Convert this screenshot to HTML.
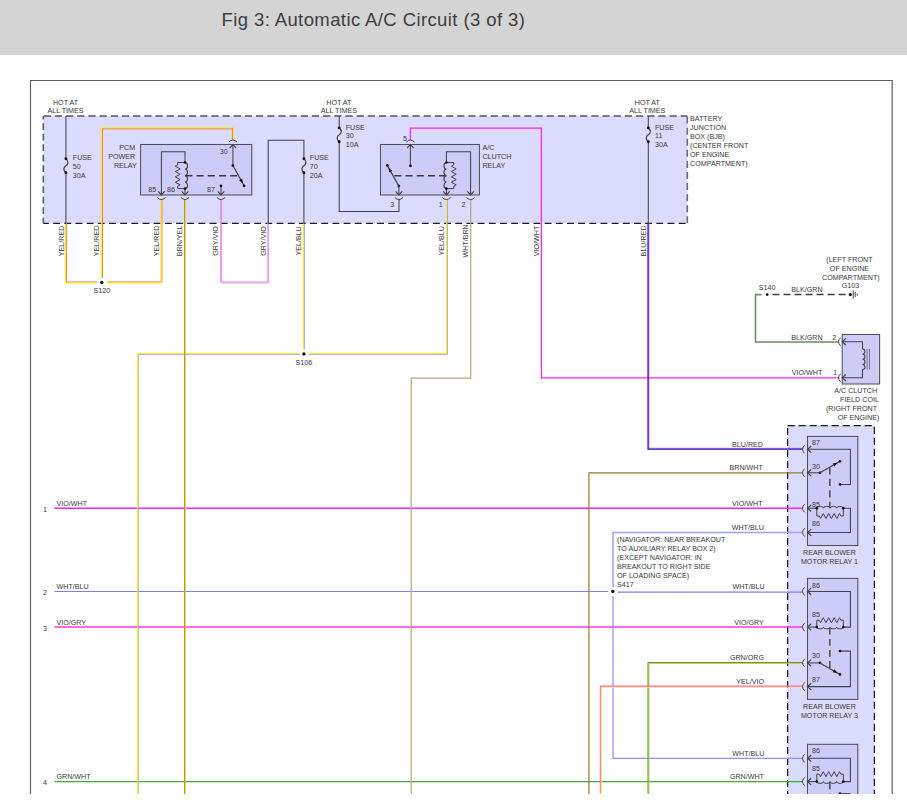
<!DOCTYPE html>
<html lang="en"><head><meta charset="utf-8"><title>Fig 3: Automatic A/C Circuit (3 of 3)</title>
<style>
html,body{margin:0;padding:0;background:#fff;}
body{width:907px;height:812px;overflow:hidden;position:relative;font-family:"Liberation Sans",sans-serif;}
#hdr{position:absolute;left:0;top:0;width:907px;height:55px;background:#d4d4d4;}
#hdr h1{position:absolute;left:221.5px;top:8.6px;margin:0;font-weight:400;font-size:18.5px;line-height:22px;color:#3e3e3e;white-space:nowrap;letter-spacing:0.40px;}
#dia{position:absolute;left:0;top:0;}
#dia text{font-family:"Liberation Sans",sans-serif;}
</style></head><body>
<div id="hdr"><h1>Fig 3: Automatic A/C Circuit (3 of 3)</h1></div>
<svg id="dia" width="907" height="812" viewBox="0 0 907 812">
<polyline points="30.5,794 30.5,80.5 892.2,80.5" fill="none" stroke="#585858" stroke-width="1.1" />
<polyline points="892.2,80 892.2,794" fill="none" stroke="#777" stroke-width="1.4" />
<rect x="43.3" y="116" width="644.1" height="107.2" fill="#dbdbfd"/>
<path d="M43.3,116H687.4" stroke="#54545e" stroke-width="1.5" stroke-dasharray="7.2 3.976" stroke-dashoffset="-0.4" fill="none"/>
<path d="M43.3,223.3H687.4" stroke="#1c1c20" stroke-width="1.25" stroke-dasharray="6.9 4.27" stroke-dashoffset="1.3" fill="none"/>
<path d="M43.3,116V223.2" stroke="#5c5c68" stroke-width="1.6" stroke-dasharray="6.7 3.8" stroke-dashoffset="3.2" fill="none"/>
<path d="M687.3,116.6V223.2" stroke="#686878" stroke-width="1.6" stroke-dasharray="7 4.08" fill="none"/>
<rect x="787.6" y="425.5" width="86.8" height="374.5" fill="#dbdbfd"/>
<rect x="787.6" y="425.5" width="86.8" height="374.5" fill="none" stroke="#15151a" stroke-width="1.25" stroke-dasharray="7.2 3.8"/>
<rect x="140.6" y="144.5" width="111.2" height="50.5" fill="#ccccf9"/>
<rect x="380.5" y="144.5" width="98.9" height="50.5" fill="#ccccf9"/>
<rect x="842.2" y="334.5" width="37.4" height="49.5" fill="#ccccf9"/>
<rect x="807.5" y="436.4" width="50.3" height="109.1" fill="#ccccf9"/>
<rect x="807.5" y="578.4" width="50.3" height="121" fill="#ccccf9"/>
<rect x="807.5" y="744.3" width="50.3" height="55.7" fill="#ccccf9"/>
<polyline points="54.5,508.2 802.6,508.2" fill="none" stroke="#ff22ee" stroke-width="1.35" />
<polyline points="54.5,591.5 608.2,591.5" fill="none" stroke="#7c7cff" stroke-width="1.15" />
<polyline points="54.5,627 802.6,627" fill="none" stroke="#ff34e4" stroke-width="1.3" />
<polyline points="54.5,781.5 802.6,781.5" fill="none" stroke="#3cb028" stroke-width="1.25" />
<polyline points="66.4,223 66.4,282 97,282" fill="none" stroke="#ff7428" stroke-width="1" stroke-linejoin="miter"/>
<polyline points="65.4,224 65.4,283 96,283" fill="none" stroke="#ffee10" stroke-width="1" stroke-linejoin="miter"/>
<polyline points="107.5,282 161.9,282 161.9,199" fill="none" stroke="#ff7428" stroke-width="1" stroke-linejoin="miter"/>
<polyline points="106.5,283 160.9,283 160.9,200" fill="none" stroke="#ffee10" stroke-width="1" stroke-linejoin="miter"/>
<polyline points="102.4,278 102.4,128.8 233.9,128.8" fill="none" stroke="#ff7428" stroke-width="1" stroke-linejoin="miter"/>
<polyline points="101.4,277 101.4,127.8 232.9,127.8" fill="none" stroke="#ffee10" stroke-width="1" stroke-linejoin="miter"/>
<polyline points="232.4,127.8 232.4,140" fill="none" stroke="#ff7428" stroke-width="1" stroke-linejoin="miter"/>
<polyline points="233.4,127.8 233.4,140" fill="none" stroke="#ffee10" stroke-width="1" stroke-linejoin="miter"/>
<polyline points="221.4,199.9 221.4,282.8 268.6,282.8 268.6,223.9" fill="none" stroke="#c486cc" stroke-width="0.8" stroke-linejoin="miter"/>
<polyline points="220.6,199.1 220.6,282 267.8,282 267.8,223.1" fill="none" stroke="#ff86fa" stroke-width="1" stroke-linejoin="miter"/>
<polyline points="304.4,223.5 304.4,349.5" fill="none" stroke="#8c8cd8" stroke-width="0.75" stroke-linejoin="miter"/>
<polyline points="303.5,223.5 303.5,349.5" fill="none" stroke="#f6f010" stroke-width="1" stroke-linejoin="miter"/>
<polyline points="447.5,200 447.5,354.4 309,354.4" fill="none" stroke="#8c8cd8" stroke-width="0.75" stroke-linejoin="miter"/>
<polyline points="446.6,199.1 446.6,353.5 308.1,353.5" fill="none" stroke="#f6f010" stroke-width="1" stroke-linejoin="miter"/>
<polyline points="300,354.4 138.3,354.4 138.3,794.5" fill="none" stroke="#8c8cd8" stroke-width="0.75" stroke-linejoin="miter"/>
<polyline points="299.1,353.5 137.4,353.5 137.4,793.6" fill="none" stroke="#f6f010" stroke-width="1" stroke-linejoin="miter"/>
<polyline points="185.45,199.5 185.45,794" fill="none" stroke="#e6dc18" stroke-width="0.9" stroke-linejoin="miter"/>
<polyline points="184.55,199.5 184.55,794" fill="none" stroke="#b09038" stroke-width="1" stroke-linejoin="miter"/>
<polyline points="470.7,199.5 470.7,378.2 411.2,378.2 411.2,794" fill="none" stroke="#b6aa80" stroke-width="1.25" />
<polyline points="410.4,140 410.4,128.2 541.4,128.2 541.4,377.8 838.6,377.8" fill="none" stroke="#ff22ff" stroke-width="1.25" />
<polyline points="648.95,222.85 648.95,448.25 803.25,448.25" fill="none" stroke="#f84848" stroke-width="0.75" stroke-linejoin="miter"/>
<polyline points="648.05,223.75 648.05,449.15 802.35,449.15" fill="none" stroke="#2610ea" stroke-width="1.3" stroke-linejoin="miter"/>
<polyline points="761.5,294.6 755.5,294.6 755.5,342 838.6,342" fill="none" stroke="#6c8b5e" stroke-width="1.55" />
<polyline points="772.5,294.6 846,294.6" fill="none" stroke="#3c3c40" stroke-width="1.5" stroke-dasharray="7 4.02" />
<polyline points="802.6,472.8 588.9,472.8 588.9,794" fill="none" stroke="#987a28" stroke-width="1.2" />
<polyline points="617.6,592.1 802.6,592.1" fill="none" stroke="#7c7cff" stroke-width="1.25" />
<polyline points="802.6,532.6 613,532.6 613,587.2" fill="none" stroke="#a0a0f6" stroke-width="1.5" />
<polyline points="613,596 613,758.4 802.6,758.4" fill="none" stroke="#8e8ef6" stroke-width="1.2" />
<polyline points="803.15,663.45 648.95,663.45 648.95,794.55" fill="none" stroke="#f2a84c" stroke-width="0.9" stroke-linejoin="miter"/>
<polyline points="802.2,662.5 648,662.5 648,793.6" fill="none" stroke="#46ae1c" stroke-width="1.1" stroke-linejoin="miter"/>
<polyline points="803.1,687.1 601.3,687.1 601.3,794.5" fill="none" stroke="#fff424" stroke-width="1" stroke-linejoin="miter"/>
<polyline points="802.1,686.1 600.3,686.1 600.3,793.5" fill="none" stroke="#ff5ed0" stroke-width="1.05" stroke-linejoin="miter"/>
<polyline points="65.9,116 65.9,158.8" fill="none" stroke="#42424c" stroke-width="1.05" />
<polyline points="65.9,172.8 65.9,223.2" fill="none" stroke="#42424c" stroke-width="1.05" />
<path d="M65.9,158.8 C69.1,161.3 68.1,164.3 65.9,165.8 S62.7,170.3 65.9,172.8" fill="none" stroke="#42424c" stroke-width="1.25" />
<circle cx="65.9" cy="158.8" r="1.45" fill="#111"/>
<circle cx="65.9" cy="172.8" r="1.45" fill="#111"/>
<polyline points="268.2,223.2 268.2,140.3 303.9,140.3 303.9,158.8" fill="none" stroke="#42424c" stroke-width="1.05" />
<polyline points="303.9,172.8 303.9,223.2" fill="none" stroke="#42424c" stroke-width="1.05" />
<path d="M303.9,158.8 C307.1,161.3 306.1,164.3 303.9,165.8 S300.7,170.3 303.9,172.8" fill="none" stroke="#42424c" stroke-width="1.25" />
<circle cx="303.9" cy="158.8" r="1.45" fill="#111"/>
<circle cx="303.9" cy="172.8" r="1.45" fill="#111"/>
<polyline points="339.2,116 339.2,127.9" fill="none" stroke="#42424c" stroke-width="1.05" />
<polyline points="339.2,141.8 339.2,211.4 399,211.4 399,199.5" fill="none" stroke="#42424c" stroke-width="1.05" />
<path d="M339.2,127.9 C342.4,130.4 341.4,133.35 339.2,134.85 S336,139.3 339.2,141.8" fill="none" stroke="#42424c" stroke-width="1.25" />
<circle cx="339.2" cy="127.9" r="1.45" fill="#111"/>
<circle cx="339.2" cy="141.8" r="1.45" fill="#111"/>
<polyline points="648.3,116 648.3,127.9" fill="none" stroke="#42424c" stroke-width="1.05" />
<polyline points="648.3,141.8 648.3,223.2" fill="none" stroke="#42424c" stroke-width="1.05" />
<path d="M648.3,127.9 C651.5,130.4 650.5,133.35 648.3,134.85 S645.1,139.3 648.3,141.8" fill="none" stroke="#42424c" stroke-width="1.25" />
<circle cx="648.3" cy="127.9" r="1.45" fill="#111"/>
<circle cx="648.3" cy="141.8" r="1.45" fill="#111"/>
<rect x="140.6" y="144.5" width="111.2" height="50.5" fill="none" stroke="#50505c" stroke-width="1.05"/>
<polyline points="161.4,195 161.4,151.8 185,151.8 185,162.5" fill="none" stroke="#42424c" stroke-width="1.05" />
<polyline points="185,188.6 185,195" fill="none" stroke="#42424c" stroke-width="1.05" />
<polyline points="185,162.5 177.7,162.5 177.7,164.9 175.3,166.23 180.1,168.89 175.3,171.56 180.1,174.22 175.3,176.88 180.1,179.54 175.3,182.21 180.1,184.87 177.7,186.2 177.7,188.6 185,188.6" fill="none" stroke="#42424c" stroke-width="1" />
<path d="M185,162.5 A3.26,2.5 90 0 1 185,169.03 A3.26,2.5 90 0 1 185,175.55 A3.26,2.5 90 0 1 185,182.07 A3.26,2.5 90 0 1 185,188.6" fill="none" stroke="#42424c" stroke-width="1.15" />
<circle cx="185" cy="162.5" r="1.35" fill="#111"/>
<circle cx="185" cy="188.6" r="1.35" fill="#111"/>
<polyline points="232.9,144.5 232.9,165.5" fill="none" stroke="#42424c" stroke-width="1.05" />
<polyline points="232.9,165.5 244.1,185.8" fill="none" stroke="#42424c" stroke-width="1.2" />
<circle cx="232.9" cy="165.5" r="1.35" fill="#111"/>
<circle cx="244.1" cy="185.8" r="1.35" fill="#111"/>
<path d="M242.84,183.52 L239.05,180.37 L242.2,178.63 Z" fill="#111"/>
<polyline points="185.4,175.7 238,175.7" fill="none" stroke="#38383f" stroke-width="1.5" stroke-dasharray="7 4.2" />
<polyline points="221,185.8 221,195" fill="none" stroke="#42424c" stroke-width="1.05" />
<circle cx="221" cy="185.8" r="1.35" fill="#111"/>
<polyline points="158.1,191.3 161.4,195 164.7,191.3" fill="none" stroke="#42424c" stroke-width="1.15" />
<path d="M157.3,197.5 Q161.4,201.5 165.5,197.5" fill="none" stroke="#42424c" stroke-width="1" />
<polyline points="181.7,191.3 185,195 188.3,191.3" fill="none" stroke="#42424c" stroke-width="1.15" />
<path d="M180.9,197.5 Q185,201.5 189.1,197.5" fill="none" stroke="#42424c" stroke-width="1" />
<polyline points="217.7,191.3 221,195 224.3,191.3" fill="none" stroke="#42424c" stroke-width="1.15" />
<path d="M216.9,197.5 Q221,201.5 225.1,197.5" fill="none" stroke="#42424c" stroke-width="1" />
<polyline points="229.6,148.2 232.9,144.5 236.2,148.2" fill="none" stroke="#42424c" stroke-width="1.15" />
<path d="M228.8,142 Q232.9,138 237,142" fill="none" stroke="#42424c" stroke-width="1" />
<text x="152.3" y="191.97" text-anchor="middle" font-size="7.15" fill="#3a3a40" >85</text>
<text x="170.9" y="191.97" text-anchor="middle" font-size="7.15" fill="#3a3a40" >86</text>
<text x="211" y="191.97" text-anchor="middle" font-size="7.15" fill="#3a3a40" >87</text>
<text x="223.8" y="153.97" text-anchor="middle" font-size="7.15" fill="#3a3a40" >30</text>
<text x="135.2" y="150.17" text-anchor="end" font-size="7.15" fill="#3a3a40" >PCM</text>
<text x="135.2" y="159.17" text-anchor="end" font-size="7.15" fill="#3a3a40" >POWER</text>
<text x="136.8" y="168.17" text-anchor="end" font-size="7.15" fill="#3a3a40" >RELAY</text>
<rect x="380.5" y="144.5" width="98.9" height="50.5" fill="none" stroke="#50505c" stroke-width="1.05"/>
<polyline points="410.4,144.5 410.4,165.8" fill="none" stroke="#42424c" stroke-width="1.05" />
<circle cx="410.4" cy="165.8" r="1.35" fill="#111"/>
<polyline points="387.3,165.4 398.9,186.1" fill="none" stroke="#42424c" stroke-width="1.2" />
<circle cx="387.3" cy="165.4" r="1.35" fill="#111"/>
<circle cx="398.9" cy="186.1" r="1.35" fill="#111"/>
<path d="M388.57,167.67 L392.39,170.8 L389.25,172.56 Z" fill="#111"/>
<polyline points="398.9,186.1 398.9,195" fill="none" stroke="#42424c" stroke-width="1.05" />
<polyline points="446.2,175.7 393.6,175.7" fill="none" stroke="#38383f" stroke-width="1.5" stroke-dasharray="7 4.2" />
<polyline points="446.4,195 446.4,188.6" fill="none" stroke="#42424c" stroke-width="1.05" />
<polyline points="446.4,162.5 446.4,151.8 470.6,151.8 470.6,195" fill="none" stroke="#42424c" stroke-width="1.05" />
<polyline points="446.4,162.5 453.8,162.5 453.8,164.9 451.4,166.23 456.2,168.89 451.4,171.56 456.2,174.22 451.4,176.88 456.2,179.54 451.4,182.21 456.2,184.87 453.8,186.2 453.8,188.6 446.4,188.6" fill="none" stroke="#42424c" stroke-width="1" />
<path d="M446.4,162.5 A3.26,2.4 90 0 0 446.4,169.03 A3.26,2.4 90 0 0 446.4,175.55 A3.26,2.4 90 0 0 446.4,182.07 A3.26,2.4 90 0 0 446.4,188.6" fill="none" stroke="#42424c" stroke-width="1.15" />
<circle cx="446.4" cy="162.5" r="1.35" fill="#111"/>
<circle cx="446.4" cy="188.6" r="1.35" fill="#111"/>
<polyline points="395.6,191.3 398.9,195 402.2,191.3" fill="none" stroke="#42424c" stroke-width="1.15" />
<path d="M394.8,197.5 Q398.9,201.5 403,197.5" fill="none" stroke="#42424c" stroke-width="1" />
<polyline points="443.1,191.3 446.4,195 449.7,191.3" fill="none" stroke="#42424c" stroke-width="1.15" />
<path d="M442.3,197.5 Q446.4,201.5 450.5,197.5" fill="none" stroke="#42424c" stroke-width="1" />
<polyline points="467.3,191.3 470.6,195 473.9,191.3" fill="none" stroke="#42424c" stroke-width="1.15" />
<path d="M466.5,197.5 Q470.6,201.5 474.7,197.5" fill="none" stroke="#42424c" stroke-width="1" />
<polyline points="407.1,148.2 410.4,144.5 413.7,148.2" fill="none" stroke="#42424c" stroke-width="1.15" />
<path d="M406.3,142 Q410.4,138 414.5,142" fill="none" stroke="#42424c" stroke-width="1" />
<text x="392.2" y="207.37" text-anchor="middle" font-size="7.15" fill="#3a3a40" >3</text>
<text x="440.7" y="207.37" text-anchor="middle" font-size="7.15" fill="#3a3a40" >1</text>
<text x="463.4" y="207.37" text-anchor="middle" font-size="7.15" fill="#3a3a40" >2</text>
<text x="405" y="140.87" text-anchor="middle" font-size="7.15" fill="#3a3a40" >5</text>
<text x="482.4" y="150.17" text-anchor="start" font-size="7.15" fill="#3a3a40" >A/C</text>
<text x="482.4" y="158.97" text-anchor="start" font-size="7.15" fill="#3a3a40" >CLUTCH</text>
<text x="482.4" y="167.77" text-anchor="start" font-size="7.15" fill="#3a3a40" >RELAY</text>
<text x="65.5" y="104.97" text-anchor="middle" font-size="7.15" fill="#3a3a40" >HOT AT</text>
<text x="65.5" y="113.07" text-anchor="middle" font-size="7.15" fill="#3a3a40" >ALL TIMES</text>
<text x="338.9" y="104.97" text-anchor="middle" font-size="7.15" fill="#3a3a40" >HOT AT</text>
<text x="338.9" y="113.07" text-anchor="middle" font-size="7.15" fill="#3a3a40" >ALL TIMES</text>
<text x="647.3" y="104.97" text-anchor="middle" font-size="7.15" fill="#3a3a40" >HOT AT</text>
<text x="647.3" y="113.07" text-anchor="middle" font-size="7.15" fill="#3a3a40" >ALL TIMES</text>
<text x="72.8" y="159.97" text-anchor="start" font-size="7.15" fill="#3a3a40" >FUSE</text>
<text x="72.8" y="169.07" text-anchor="start" font-size="7.15" fill="#3a3a40" >50</text>
<text x="72.8" y="178.17" text-anchor="start" font-size="7.15" fill="#3a3a40" >30A</text>
<text x="309.8" y="159.97" text-anchor="start" font-size="7.15" fill="#3a3a40" >FUSE</text>
<text x="309.8" y="169.07" text-anchor="start" font-size="7.15" fill="#3a3a40" >70</text>
<text x="309.8" y="178.17" text-anchor="start" font-size="7.15" fill="#3a3a40" >20A</text>
<text x="345.7" y="130.07" text-anchor="start" font-size="7.15" fill="#3a3a40" >FUSE</text>
<text x="345.7" y="138.47" text-anchor="start" font-size="7.15" fill="#3a3a40" >30</text>
<text x="345.7" y="147.07" text-anchor="start" font-size="7.15" fill="#3a3a40" >10A</text>
<text x="655" y="130.17" text-anchor="start" font-size="7.15" fill="#3a3a40" >FUSE</text>
<text x="655" y="138.27" text-anchor="start" font-size="7.15" fill="#3a3a40" >11</text>
<text x="655" y="147.37" text-anchor="start" font-size="7.15" fill="#3a3a40" >30A</text>
<text x="690" y="120.87" text-anchor="start" font-size="7.15" fill="#3a3a40" >BATTERY</text>
<text x="690" y="129.97" text-anchor="start" font-size="7.15" fill="#3a3a40" >JUNCTION</text>
<text x="690" y="139.07" text-anchor="start" font-size="7.15" fill="#3a3a40" >BOX (BJB)</text>
<text x="690" y="148.17" text-anchor="start" font-size="7.15" fill="#3a3a40" >(CENTER FRONT</text>
<text x="690" y="157.27" text-anchor="start" font-size="7.15" fill="#3a3a40" >OF ENGINE</text>
<text x="690" y="166.37" text-anchor="start" font-size="7.15" fill="#3a3a40" >COMPARTMENT)</text>
<text x="61.8" y="243.47" text-anchor="middle" font-size="7.15" fill="#3a3a40" transform="rotate(-90 61.8 240.9)" >YEL/RED</text>
<text x="96.8" y="243.47" text-anchor="middle" font-size="7.15" fill="#3a3a40" transform="rotate(-90 96.8 240.9)" >YEL/RED</text>
<text x="156.7" y="243.47" text-anchor="middle" font-size="7.15" fill="#3a3a40" transform="rotate(-90 156.7 240.9)" >YEL/RED</text>
<text x="179.6" y="243.47" text-anchor="middle" font-size="7.15" fill="#3a3a40" transform="rotate(-90 179.6 240.9)" >BRN/YEL</text>
<text x="215.1" y="243.47" text-anchor="middle" font-size="7.15" fill="#3a3a40" transform="rotate(-90 215.1 240.9)" >GRY/VIO</text>
<text x="263.9" y="243.47" text-anchor="middle" font-size="7.15" fill="#3a3a40" transform="rotate(-90 263.9 240.9)" >GRY/VIO</text>
<text x="298.8" y="243.47" text-anchor="middle" font-size="7.15" fill="#3a3a40" transform="rotate(-90 298.8 240.9)" >YEL/BLU</text>
<text x="441.5" y="243.47" text-anchor="middle" font-size="7.15" fill="#3a3a40" transform="rotate(-90 441.5 240.9)" >YEL/BLU</text>
<text x="465.9" y="243.47" text-anchor="middle" font-size="7.15" fill="#3a3a40" transform="rotate(-90 465.9 240.9)" >WHT/BRN</text>
<text x="536.4" y="243.47" text-anchor="middle" font-size="7.15" fill="#3a3a40" transform="rotate(-90 536.4 240.9)" >VIO/WHT</text>
<text x="643.3" y="243.47" text-anchor="middle" font-size="7.15" fill="#3a3a40" transform="rotate(-90 643.3 240.9)" >BLU/RED</text>
<circle cx="101.8" cy="282.5" r="1.7" fill="#111"/>
<text x="101.8" y="293.37" text-anchor="middle" font-size="7.15" fill="#3a3a40" >S120</text>
<circle cx="303.9" cy="353.9" r="1.7" fill="#111"/>
<text x="303.9" y="364.77" text-anchor="middle" font-size="7.15" fill="#3a3a40" >S106</text>
<circle cx="767.2" cy="294.6" r="1.4" fill="#111"/>
<text x="767.2" y="290.17" text-anchor="middle" font-size="7.15" fill="#3a3a40" >S140</text>
<text x="807" y="291.97" text-anchor="middle" font-size="7.15" fill="#3a3a40" >BLK/GRN</text>
<circle cx="850.3" cy="294.6" r="1.6" fill="#111"/>
<polyline points="853.2,290.4 853.2,298.8" fill="none" stroke="#42424c" stroke-width="1" />
<polyline points="855.2,292 855.2,297.2" fill="none" stroke="#42424c" stroke-width="1" />
<polyline points="857.2,293.6 857.2,295.6" fill="none" stroke="#42424c" stroke-width="1" />
<text x="849.4" y="262.37" text-anchor="middle" font-size="7.15" fill="#3a3a40" >(LEFT FRONT</text>
<text x="849.5" y="271.07" text-anchor="middle" font-size="7.15" fill="#3a3a40" >OF ENGINE</text>
<text x="850.8" y="279.77" text-anchor="middle" font-size="7.15" fill="#3a3a40" >COMPARTMENT)</text>
<text x="850.4" y="288.47" text-anchor="middle" font-size="7.15" fill="#3a3a40" >G103</text>
<rect x="842.2" y="334.5" width="37.4" height="49.5" fill="none" stroke="#50505c" stroke-width="1.05"/>
<polyline points="842.2,341.7 862.5,341.7 862.5,349" fill="none" stroke="#42424c" stroke-width="1.05" />
<polyline points="862.5,369.6 862.5,377.8 842.2,377.8" fill="none" stroke="#42424c" stroke-width="1.05" />
<path d="M862.5,349 A2.58,2.6 90 0 1 862.5,354.15 A2.58,2.6 90 0 1 862.5,359.3 A2.58,2.6 90 0 1 862.5,364.45 A2.58,2.6 90 0 1 862.5,369.6" fill="none" stroke="#42424c" stroke-width="1.05" />
<polyline points="867.1,349 867.1,369.6" fill="none" stroke="#5a5a66" stroke-width="0.8" />
<polyline points="869.5,349 869.5,369.6" fill="none" stroke="#5a5a66" stroke-width="0.8" />
<polyline points="845.9,338.4 842.2,341.7 845.9,345" fill="none" stroke="#42424c" stroke-width="1.15" />
<path d="M840.6,337.6 Q836.5,341.7 840.6,345.8" fill="none" stroke="#42424c" stroke-width="1" />
<polyline points="845.9,374.5 842.2,377.8 845.9,381.1" fill="none" stroke="#42424c" stroke-width="1.15" />
<path d="M840.6,373.7 Q836.5,377.8 840.6,381.9" fill="none" stroke="#42424c" stroke-width="1" />
<text x="807" y="339.87" text-anchor="middle" font-size="7.15" fill="#3a3a40" >BLK/GRN</text>
<text x="834.3" y="339.87" text-anchor="middle" font-size="7.15" fill="#3a3a40" >2</text>
<text x="807" y="375.17" text-anchor="middle" font-size="7.15" fill="#3a3a40" >VIO/WHT</text>
<text x="835.3" y="375.17" text-anchor="middle" font-size="7.15" fill="#3a3a40" >1</text>
<text x="877.2" y="392.87" text-anchor="end" font-size="7.15" fill="#3a3a40" >A/C CLUTCH</text>
<text x="878.9" y="401.77" text-anchor="end" font-size="7.15" fill="#3a3a40" >FIELD COIL</text>
<text x="877" y="410.67" text-anchor="end" font-size="7.15" fill="#3a3a40" >(RIGHT FRONT</text>
<text x="879.3" y="419.57" text-anchor="end" font-size="7.15" fill="#3a3a40" >OF ENGINE)</text>
<rect x="807.5" y="436.4" width="50.3" height="109.1" fill="none" stroke="#50505c" stroke-width="1.05"/>
<polyline points="807.5,449.3 850.4,449.3 850.4,484.4 840,484.4" fill="none" stroke="#42424c" stroke-width="1.05" />
<circle cx="840" cy="484.4" r="1.35" fill="#111"/>
<polyline points="807.5,472.8 820,472.8" fill="none" stroke="#42424c" stroke-width="1.05" />
<circle cx="820" cy="472.8" r="1.35" fill="#111"/>
<polyline points="820,472.8 840,461.3" fill="none" stroke="#42424c" stroke-width="1.2" />
<circle cx="840" cy="461.3" r="1.35" fill="#111"/>
<path d="M837.57,462.7 L834.48,466.55 L832.69,463.43 Z" fill="#111"/>
<polyline points="829.8,467.2 829.8,507.8" fill="none" stroke="#50505c" stroke-width="1.6" stroke-dasharray="7.2 4.3" />
<polyline points="807.5,508.2 816.8,508.2" fill="none" stroke="#42424c" stroke-width="1.05" />
<polyline points="843.3,508.2 850.4,508.2 850.4,532.4 807.5,532.4" fill="none" stroke="#42424c" stroke-width="1.05" />
<path d="M816.8,508.2 A3.31,1.8 0 0 1 823.42,508.2 A3.31,1.8 0 0 1 830.05,508.2 A3.31,1.8 0 0 1 836.67,508.2 A3.31,1.8 0 0 1 843.3,508.2" fill="none" stroke="#42424c" stroke-width="1" />
<polyline points="816.8,508.2 816.8,516 819.2,516 820.56,518.5 823.27,513.5 825.98,518.5 828.69,513.5 831.41,518.5 834.12,513.5 836.83,518.5 839.54,513.5 840.9,516 843.3,516 843.3,508.2" fill="none" stroke="#42424c" stroke-width="1" />
<circle cx="816.8" cy="508.2" r="1.35" fill="#111"/>
<circle cx="843.3" cy="508.2" r="1.35" fill="#111"/>
<polyline points="811.2,446 807.5,449.3 811.2,452.6" fill="none" stroke="#42424c" stroke-width="1.15" />
<path d="M804.6,445.2 Q800.5,449.3 804.6,453.4" fill="none" stroke="#42424c" stroke-width="1" />
<polyline points="811.2,469.5 807.5,472.8 811.2,476.1" fill="none" stroke="#42424c" stroke-width="1.15" />
<path d="M804.6,468.7 Q800.5,472.8 804.6,476.9" fill="none" stroke="#42424c" stroke-width="1" />
<polyline points="811.2,504.9 807.5,508.2 811.2,511.5" fill="none" stroke="#42424c" stroke-width="1.15" />
<path d="M804.6,504.1 Q800.5,508.2 804.6,512.3" fill="none" stroke="#42424c" stroke-width="1" />
<polyline points="811.2,529.1 807.5,532.4 811.2,535.7" fill="none" stroke="#42424c" stroke-width="1.15" />
<path d="M804.6,528.3 Q800.5,532.4 804.6,536.5" fill="none" stroke="#42424c" stroke-width="1" />
<text x="812" y="445.17" text-anchor="start" font-size="7.15" fill="#3a3a40" >87</text>
<text x="812" y="469.17" text-anchor="start" font-size="7.15" fill="#3a3a40" >30</text>
<text x="812" y="506.87" text-anchor="start" font-size="7.15" fill="#3a3a40" >85</text>
<text x="812" y="525.97" text-anchor="start" font-size="7.15" fill="#3a3a40" >86</text>
<text x="829.5" y="554.87" text-anchor="middle" font-size="7.15" fill="#3a3a40" >REAR BLOWER</text>
<text x="829.5" y="563.97" text-anchor="middle" font-size="7.15" fill="#3a3a40" >MOTOR RELAY 1</text>
<rect x="807.5" y="578.4" width="50.3" height="121" fill="none" stroke="#50505c" stroke-width="1.05"/>
<polyline points="807.5,591.4 850.4,591.4 850.4,627.1 843.3,627.1" fill="none" stroke="#42424c" stroke-width="1.05" />
<polyline points="807.5,627.1 816.8,627.1" fill="none" stroke="#42424c" stroke-width="1.05" />
<path d="M816.8,627.1 A3.31,1.8 0 0 0 823.42,627.1 A3.31,1.8 0 0 0 830.05,627.1 A3.31,1.8 0 0 0 836.67,627.1 A3.31,1.8 0 0 0 843.3,627.1" fill="none" stroke="#42424c" stroke-width="1" />
<polyline points="816.8,627.1 816.8,620.2 819.2,620.2 820.56,622.7 823.27,617.7 825.98,622.7 828.69,617.7 831.41,622.7 834.12,617.7 836.83,622.7 839.54,617.7 840.9,620.2 843.3,620.2 843.3,627.1" fill="none" stroke="#42424c" stroke-width="1" />
<circle cx="816.8" cy="627.1" r="1.35" fill="#111"/>
<circle cx="843.3" cy="627.1" r="1.35" fill="#111"/>
<polyline points="829.8,627.8 829.8,668.4" fill="none" stroke="#50505c" stroke-width="1.6" stroke-dasharray="6.8 4.3" />
<polyline points="807.5,662.9 820,662.9" fill="none" stroke="#42424c" stroke-width="1.05" />
<circle cx="820" cy="662.9" r="1.35" fill="#111"/>
<polyline points="820,662.9 840,674.4" fill="none" stroke="#42424c" stroke-width="1.2" />
<circle cx="840" cy="674.4" r="1.35" fill="#111"/>
<path d="M837.57,673 L832.69,672.27 L834.48,669.15 Z" fill="#111"/>
<polyline points="840,651.1 850.4,651.1 850.4,686.6 807.5,686.6" fill="none" stroke="#42424c" stroke-width="1.05" />
<circle cx="840" cy="651.1" r="1.35" fill="#111"/>
<polyline points="811.2,588.1 807.5,591.4 811.2,594.7" fill="none" stroke="#42424c" stroke-width="1.15" />
<path d="M804.6,587.3 Q800.5,591.4 804.6,595.5" fill="none" stroke="#42424c" stroke-width="1" />
<polyline points="811.2,623.8 807.5,627.1 811.2,630.4" fill="none" stroke="#42424c" stroke-width="1.15" />
<path d="M804.6,623 Q800.5,627.1 804.6,631.2" fill="none" stroke="#42424c" stroke-width="1" />
<polyline points="811.2,659.6 807.5,662.9 811.2,666.2" fill="none" stroke="#42424c" stroke-width="1.15" />
<path d="M804.6,658.8 Q800.5,662.9 804.6,667" fill="none" stroke="#42424c" stroke-width="1" />
<polyline points="811.2,683.3 807.5,686.6 811.2,689.9" fill="none" stroke="#42424c" stroke-width="1.15" />
<path d="M804.6,682.5 Q800.5,686.6 804.6,690.7" fill="none" stroke="#42424c" stroke-width="1" />
<text x="812" y="588.27" text-anchor="start" font-size="7.15" fill="#3a3a40" >86</text>
<text x="812" y="616.87" text-anchor="start" font-size="7.15" fill="#3a3a40" >85</text>
<text x="812" y="658.17" text-anchor="start" font-size="7.15" fill="#3a3a40" >30</text>
<text x="812" y="681.87" text-anchor="start" font-size="7.15" fill="#3a3a40" >87</text>
<text x="829.5" y="709.07" text-anchor="middle" font-size="7.15" fill="#3a3a40" >REAR BLOWER</text>
<text x="829.5" y="718.27" text-anchor="middle" font-size="7.15" fill="#3a3a40" >MOTOR RELAY 3</text>
<rect x="807.5" y="744.3" width="50.3" height="55.7" fill="none" stroke="#50505c" stroke-width="1.05"/>
<polyline points="807.5,758.3 850.4,758.3 850.4,781.6 843.3,781.6" fill="none" stroke="#42424c" stroke-width="1.05" />
<polyline points="807.5,781.6 816.8,781.6" fill="none" stroke="#42424c" stroke-width="1.05" />
<path d="M816.8,781.6 A3.31,1.8 0 0 0 823.42,781.6 A3.31,1.8 0 0 0 830.05,781.6 A3.31,1.8 0 0 0 836.67,781.6 A3.31,1.8 0 0 0 843.3,781.6" fill="none" stroke="#42424c" stroke-width="1" />
<polyline points="816.8,781.6 816.8,774.2 819.2,774.2 820.56,776.7 823.27,771.7 825.98,776.7 828.69,771.7 831.41,776.7 834.12,771.7 836.83,776.7 839.54,771.7 840.9,774.2 843.3,774.2 843.3,781.6" fill="none" stroke="#42424c" stroke-width="1" />
<circle cx="816.8" cy="781.6" r="1.35" fill="#111"/>
<circle cx="843.3" cy="781.6" r="1.35" fill="#111"/>
<polyline points="829.8,782.4 829.8,800" fill="none" stroke="#50505c" stroke-width="1.6" stroke-dasharray="6.8 4.3" />
<circle cx="840" cy="793.6" r="1.35" fill="#111"/>
<polyline points="840,793.6 850.4,793.6" fill="none" stroke="#42424c" stroke-width="1.05" />
<polyline points="811.2,755 807.5,758.3 811.2,761.6" fill="none" stroke="#42424c" stroke-width="1.15" />
<path d="M804.6,754.2 Q800.5,758.3 804.6,762.4" fill="none" stroke="#42424c" stroke-width="1" />
<polyline points="811.2,778.3 807.5,781.6 811.2,784.9" fill="none" stroke="#42424c" stroke-width="1.15" />
<path d="M804.6,777.5 Q800.5,781.6 804.6,785.7" fill="none" stroke="#42424c" stroke-width="1" />
<text x="812" y="753.17" text-anchor="start" font-size="7.15" fill="#3a3a40" >86</text>
<text x="812" y="771.27" text-anchor="start" font-size="7.15" fill="#3a3a40" >85</text>
<text x="763" y="446.97" text-anchor="end" font-size="7.15" fill="#3a3a40" >BLU/RED</text>
<text x="762.8" y="470.47" text-anchor="end" font-size="7.15" fill="#3a3a40" >BRN/WHT</text>
<text x="762.6" y="506.17" text-anchor="end" font-size="7.15" fill="#3a3a40" >VIO/WHT</text>
<text x="763.8" y="530.27" text-anchor="end" font-size="7.15" fill="#3a3a40" >WHT/BLU</text>
<text x="764.6" y="589.27" text-anchor="end" font-size="7.15" fill="#3a3a40" >WHT/BLU</text>
<text x="763.8" y="624.77" text-anchor="end" font-size="7.15" fill="#3a3a40" >VIO/GRY</text>
<text x="764" y="660.07" text-anchor="end" font-size="7.15" fill="#3a3a40" >GRN/ORG</text>
<text x="764" y="684.07" text-anchor="end" font-size="7.15" fill="#3a3a40" >YEL/VIO</text>
<text x="764.4" y="756.37" text-anchor="end" font-size="7.15" fill="#3a3a40" >WHT/BLU</text>
<text x="764" y="779.07" text-anchor="end" font-size="7.15" fill="#3a3a40" >GRN/WHT</text>
<text x="45" y="511.97" text-anchor="middle" font-size="7.15" fill="#3a3a40" >1</text>
<text x="56.5" y="506.17" text-anchor="start" font-size="7.15" fill="#3a3a40" >VIO/WHT</text>
<text x="45" y="595.27" text-anchor="middle" font-size="7.15" fill="#3a3a40" >2</text>
<text x="56.5" y="589.47" text-anchor="start" font-size="7.15" fill="#3a3a40" >WHT/BLU</text>
<text x="45" y="630.77" text-anchor="middle" font-size="7.15" fill="#3a3a40" >3</text>
<text x="56.5" y="624.97" text-anchor="start" font-size="7.15" fill="#3a3a40" >VIO/GRY</text>
<text x="45" y="785.27" text-anchor="middle" font-size="7.15" fill="#3a3a40" >4</text>
<text x="56.5" y="779.47" text-anchor="start" font-size="7.15" fill="#3a3a40" >GRN/WHT</text>
<circle cx="612.8" cy="591.6" r="1.75" fill="#111"/>
<text x="617" y="542.37" text-anchor="start" font-size="7.15" fill="#3a3a40" >(NAVIGATOR: NEAR BREAKOUT</text>
<text x="617" y="551.32" text-anchor="start" font-size="7.15" fill="#3a3a40" >TO AUXILIARY RELAY BOX 2)</text>
<text x="617" y="560.27" text-anchor="start" font-size="7.15" fill="#3a3a40" >(EXCEPT NAVIGATOR: IN</text>
<text x="617" y="569.22" text-anchor="start" font-size="7.15" fill="#3a3a40" >BREAKOUT TO RIGHT SIDE</text>
<text x="617" y="578.17" text-anchor="start" font-size="7.15" fill="#3a3a40" >OF LOADING SPACE)</text>
<text x="617" y="587.12" text-anchor="start" font-size="7.15" fill="#3a3a40" >S417</text>
<rect x="0" y="794" width="907" height="18" fill="#fff"/>
</svg>
</body></html>
